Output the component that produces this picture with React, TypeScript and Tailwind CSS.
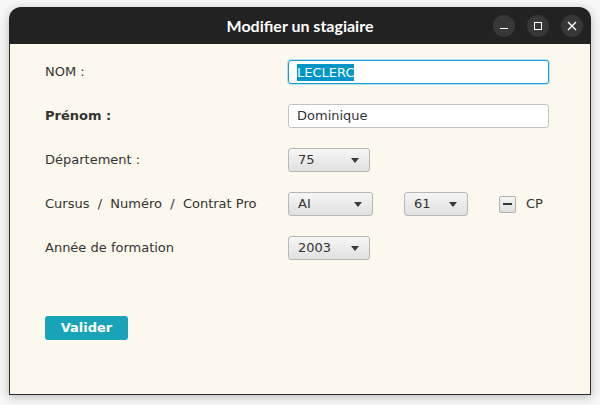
import type { ReactNode } from 'react';

const body = { fontFamily: '"DejaVu Sans", "Liberation Sans", sans-serif' };

function Combo({ value, width }: { value: string; width: string }) {
  return (
    <div
      className={`${width} h-[24px] flex items-center justify-between pl-[9px] pr-[10px] rounded-[3px] border border-[#b7b7b7] bg-gradient-to-b from-[#f6f6f6] to-[#e0e0e0] text-[13px] text-[#333]`}
    >
      <span>{value}</span>
      <span className="w-0 h-0 border-l-[4px] border-r-[4px] border-t-[5px] border-l-transparent border-r-transparent border-t-[#3a3a3a]" />
    </div>
  );
}

function Row({ label, children, bold }: { label: string; children: ReactNode; bold?: boolean }) {
  return (
    <div className="flex items-center h-[24px]">
      <div className={`w-[243px] whitespace-pre text-[13px] text-[#333] ${bold ? 'font-bold' : ''}`}>{label}</div>
      {children}
    </div>
  );
}

export default function App() {
  return (
    <div className="w-[600px] h-[405px] bg-[#f7f7f7] pt-[7px] px-[9px] pb-[10px]" style={body}>
      <div className="h-full flex flex-col rounded-t-[12px] shadow-[0_2px_10px_rgba(0,0,0,0.25)]">
        {/* Title bar */}
        <div className="relative h-[37px] shrink-0 rounded-t-[12px] bg-[#222222] flex items-center justify-center">
          <span
            className="text-white text-[16px] font-bold"
            style={{ fontFamily: 'Lato, "Open Sans", sans-serif' }}
          >
            Modifier un stagiaire
          </span>
          <div className="absolute right-[8px] top-[8px] flex gap-[12px]">
            <div className="w-[22px] h-[22px] rounded-full bg-[#373737] flex items-center justify-center">
              <div className="w-[8px] h-[1.5px] bg-white mt-[5px]" />
            </div>
            <div className="w-[22px] h-[22px] rounded-full bg-[#373737] flex items-center justify-center">
              <div className="w-[8px] h-[8px] border-[1.3px] border-white" />
            </div>
            <div className="w-[22px] h-[22px] rounded-full bg-[#373737] flex items-center justify-center">
              <svg width="10" height="10" viewBox="0 0 10 10">
                <path d="M1 1L9 9M9 1L1 9" stroke="white" strokeWidth="1.4" />
              </svg>
            </div>
          </div>
        </div>

        {/* Body */}
        <div className="flex-1 bg-[#fdf8ee] border-x border-b border-[#2b2b2b] pl-[35px] pt-[16px] flex flex-col">
          <div className="flex flex-col gap-[20px]">
            <Row label="NOM :">
              <div className="w-[261px] h-[24px] rounded-[3px] border border-[#1a9fd2] shadow-[0_0_0_1px_#b4e0f0] bg-white flex items-center pl-[8px] text-[13px]">
                <span className="bg-[#0096c9] text-white leading-[17px]">LECLERC</span>
              </div>
            </Row>
            <Row label="Prénom :" bold>
              <div className="w-[261px] h-[24px] rounded-[3px] border border-[#c2c2c2] bg-white flex items-center pl-[8px] text-[13px] text-[#333]">
                Dominique
              </div>
            </Row>
            <Row label="Département :">
              <Combo value="75" width="w-[82px]" />
            </Row>
            <Row label="Cursus  /  Numéro  /  Contrat Pro">
              <div className="flex items-center">
                <Combo value="AI" width="w-[85px]" />
                <div className="ml-[31px]">
                  <Combo value="61" width="w-[64px]" />
                </div>
                <div className="ml-[31px] w-[17px] h-[17px] rounded-[2px] border border-[#b0b0b0] bg-gradient-to-b from-[#f6f6f6] to-[#e0e0e0] flex items-center justify-center">
                  <div className="w-[9px] h-[2px] bg-[#333]" />
                </div>
                <span className="ml-[10px] text-[13px] text-[#333]">CP</span>
              </div>
            </Row>
            <Row label="Année de formation">
              <Combo value="2003" width="w-[82px]" />
            </Row>
          </div>
          <div className="mt-[55px]">
            <button className="w-[83px] h-[24px] rounded-[3px] bg-[#18a3b8] text-white text-[13px] font-bold">
              Valider
            </button>
          </div>
        </div>
      </div>
    </div>
  );
}
